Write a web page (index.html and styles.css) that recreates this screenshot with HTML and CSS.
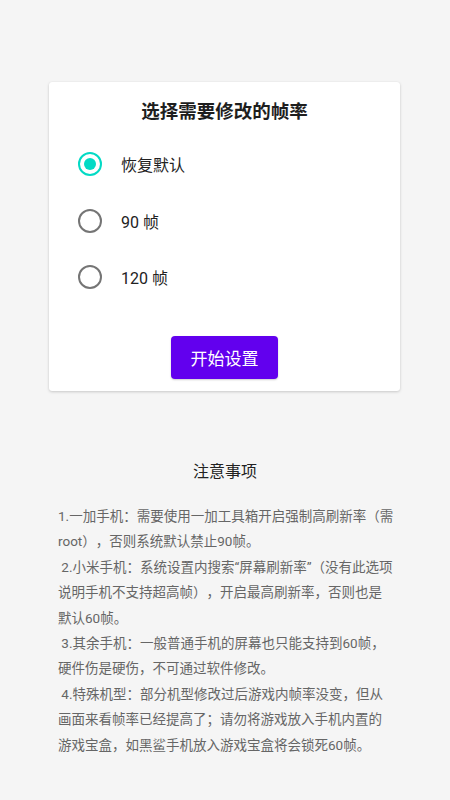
FILE: index.html
```html
<!DOCTYPE html>
<html lang="zh-CN">
<head>
<meta charset="utf-8">
<link rel="stylesheet" href="styles.css">
</head>
<body>
<div class="page">
  <div class="card">
    <div class="card-title">选择需要修改的帧率</div>
    <div class="options">
      <div class="option">
        <span class="radio checked"><span class="dot"></span></span>
        <span class="label">恢复默认</span>
      </div>
      <div class="option">
        <span class="radio"></span>
        <span class="label">90 帧</span>
      </div>
      <div class="option">
        <span class="radio"></span>
        <span class="label">120 帧</span>
      </div>
    </div>
    <div class="actions">
      <button class="btn">开始设置</button>
    </div>
  </div>
  <div class="notes">
    <div class="notes-title">注意事项</div>
    <div class="notes-body">
      <p>1.一加手机：需要使用一加工具箱开启强制高刷新率（需<br>root），否则系统默认禁止90帧。</p>
      <p>&nbsp;2.小米手机：系统设置内搜索“屏幕刷新率”（没有此选项<br>说明手机不支持超高帧），开启最高刷新率，否则也是<br>默认60帧。</p>
      <p>&nbsp;3.其余手机：一般普通手机的屏幕也只能支持到60帧，<br>硬件伤是硬伤，不可通过软件修改。</p>
      <p>&nbsp;4.特殊机型：部分机型修改过后游戏内帧率没变，但从<br>画面来看帧率已经提高了；请勿将游戏放入手机内置的<br>游戏宝盒，如黑鲨手机放入游戏宝盒将会锁死60帧。</p>
    </div>
  </div>
</div>
</body>
</html>
```

FILE: styles.css
```css
html, body {
  margin: 0;
  padding: 0;
}
body {
  background: #f5f5f5;
  font-family: Roboto, "Noto Sans CJK SC", sans-serif;
  width: 450px;
  height: 800px;
  overflow: hidden;
  text-spacing-trim: space-all;
}
.page {
  display: flex;
  flex-direction: column;
  padding-top: 82px;
}
.card {
  margin-left: 49px;
  width: 351px;
  height: 309px;
  box-sizing: border-box;
  background: #ffffff;
  border-radius: 3px;
  box-shadow: 0 1px 3px rgba(0,0,0,0.18), 0 0 1px rgba(0,0,0,0.08);
  padding-top: 18px;
  display: flex;
  flex-direction: column;
}
.card-title {
  text-align: center;
  font-size: 18.5px;
  line-height: 24px;
  font-weight: bold;
  color: #1e1e1e;
}
.options {
  margin-top: 12px;
  display: flex;
  flex-direction: column;
}
.option {
  height: 56.5px;
  display: flex;
  align-items: center;
  padding-left: 29px;
}
.radio {
  width: 24px;
  height: 24px;
  box-sizing: border-box;
  border: 2.5px solid #757575;
  border-radius: 50%;
  display: flex;
  align-items: center;
  justify-content: center;
}
.radio.checked {
  border-color: #03dac5;
}
.dot {
  width: 12px;
  height: 12px;
  border-radius: 50%;
  background: #03dac5;
}
.label {
  margin-left: 19px;
  font-size: 16px;
  color: #222222;
}
.actions {
  margin-top: 30px;
  display: flex;
  justify-content: center;
}
.btn {
  width: 107px;
  height: 43px;
  border: none;
  border-radius: 4px;
  background: #6200ee;
  color: #ffffff;
  font-family: Roboto, "Noto Sans CJK SC", sans-serif;
  font-size: 17px;
  padding: 0;
  box-shadow: 0 1px 2px rgba(0,0,0,0.2);
}
.notes {
  margin-top: 69px;
  padding: 0 30px 0 58px;
}
.notes-title {
  text-align: center;
  font-size: 16px;
  line-height: 24px;
  color: #222222;
  margin-right: 28px;
}
.notes-body {
  margin-top: 20px;
  font-size: 13.5px;
  line-height: 25.4px;
  color: #666666;
  white-space: nowrap;
}
.notes-body p {
  margin: 0;
}
```
